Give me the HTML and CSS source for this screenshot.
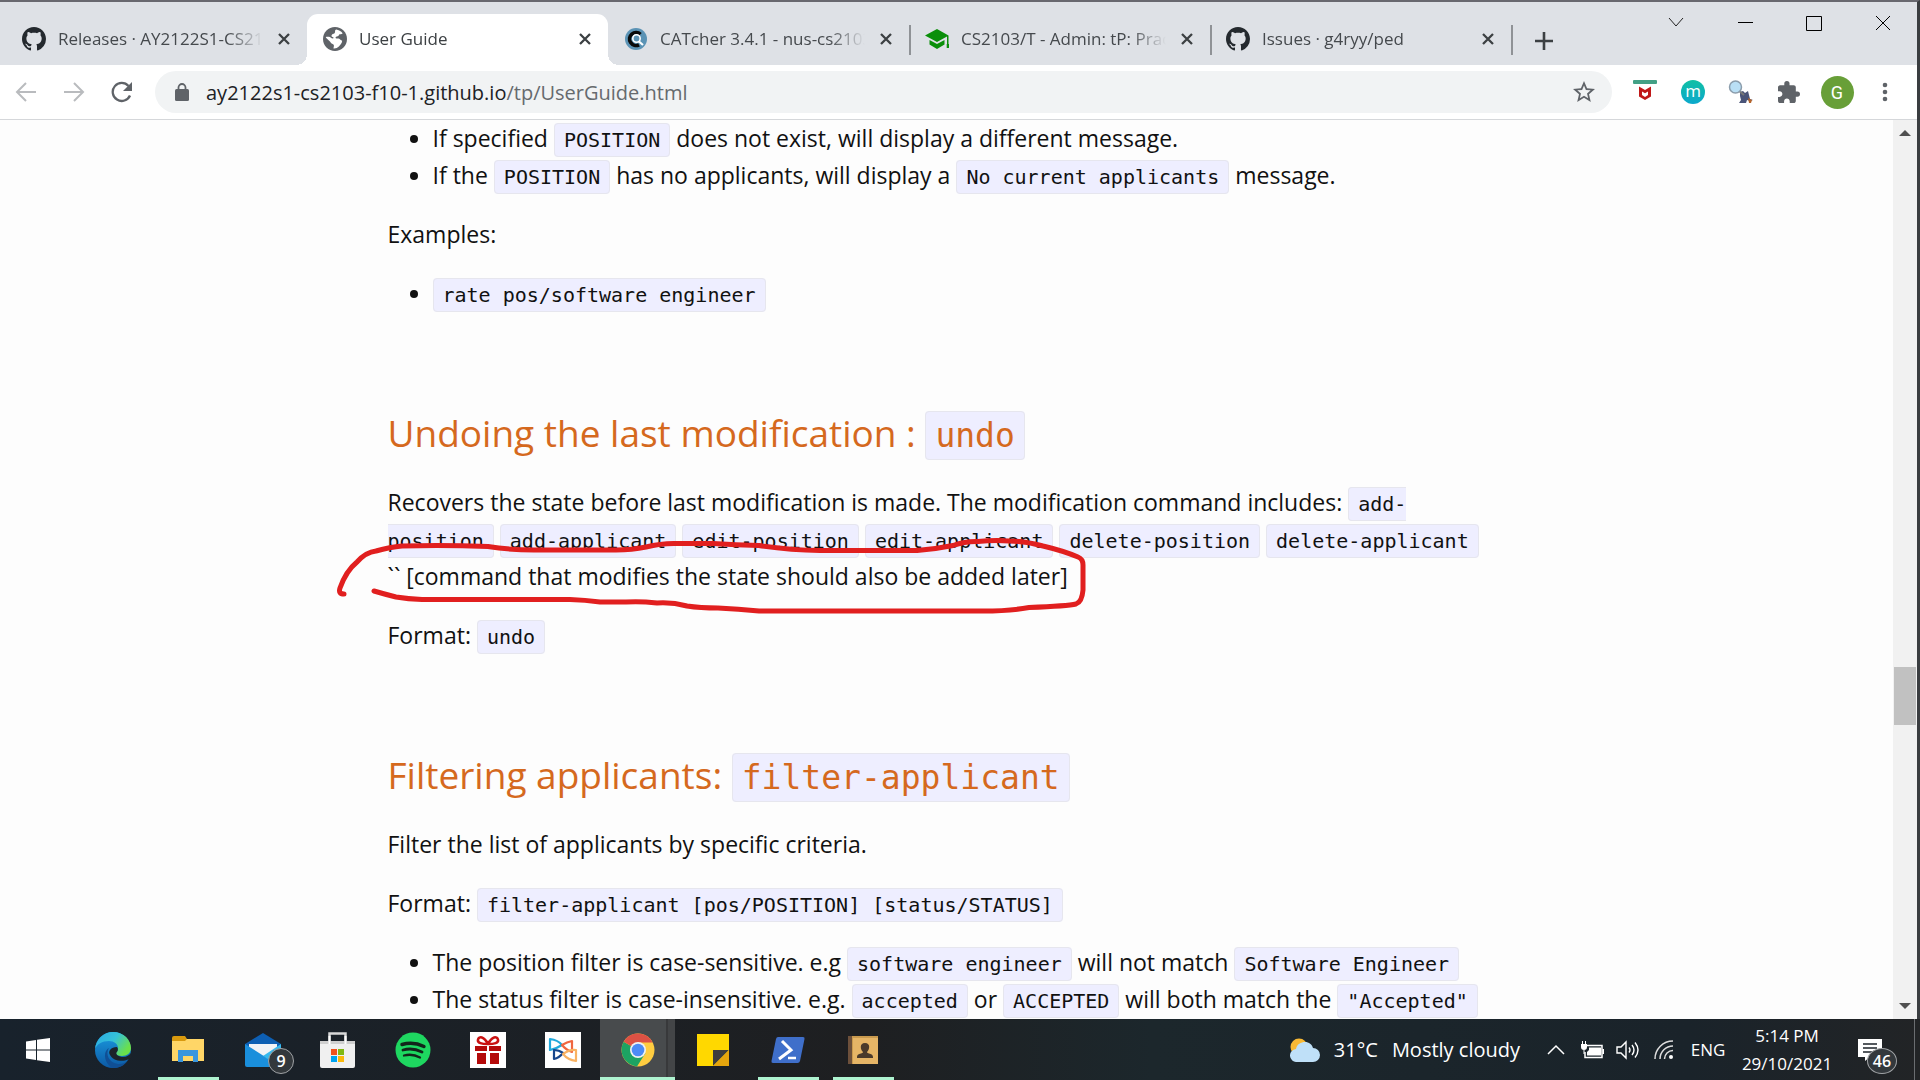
FILE: index.html
```html
<!DOCTYPE html>
<html lang="en">
<head>
<meta charset="utf-8">
<title>User Guide</title>
<link rel="stylesheet" href="styles.css">
</head>
<body>
<svg width="0" height="0" class="defs" aria-hidden="true">
  <defs>
    <symbol id="github" viewBox="0 0 16 16"><path fill="#24292e" d="M8 0C3.58 0 0 3.58 0 8c0 3.54 2.29 6.53 5.47 7.59.4.07.55-.17.55-.38 0-.19-.01-.82-.01-1.49-2.01.37-2.53-.49-2.69-.94-.09-.23-.48-.94-.82-1.13-.28-.15-.68-.52-.01-.53.63-.01 1.08.58 1.23.82.72 1.21 1.87.87 2.33.66.07-.52.28-.87.51-1.07-1.78-.2-3.64-.89-3.64-3.95 0-.87.31-1.59.82-2.15-.08-.2-.36-1.02.08-2.12 0 0 .67-.21 2.2.82.64-.18 1.32-.27 2-.27s1.36.09 2 .27c1.53-1.04 2.2-.82 2.2-.82.44 1.1.16 1.92.08 2.12.51.56.82 1.27.82 2.15 0 3.07-1.87 3.75-3.65 3.95.29.25.54.73.54 1.48 0 1.07-.01 1.93-.01 2.2 0 .21.15.46.55.38A8.01 8.01 0 0 0 16 8c0-4.42-3.58-8-8-8z"/></symbol>
    <symbol id="close" viewBox="0 0 14 14"><path d="M2 2l10 10M12 2L2 12" stroke="#3c4043" stroke-width="2.3" fill="none"/></symbol>
  </defs>
</svg>

<div class="window">
  <header class="tabstrip">
    <div class="tabs">
      <div class="tab">
        <svg class="favicon"><use href="#github"/></svg>
        <span class="tab-title">Releases · AY2122S1-CS2103</span>
        <button class="tab-close" aria-label="Close tab"><svg width="14" height="14"><use href="#close"/></svg></button>
      </div>
      <div class="tab active">
        <svg class="favicon" viewBox="2 2 20 20"><path fill="#5f6368" d="M12 2C6.48 2 2 6.48 2 12s4.480 10 10 10 10-4.480 10-10S17.520 2 12 2z"/><path fill="#fff" d="M13 4c2 .2 4 1.400 5.400 3.200-.7.9-1.400 1-2.400.8-.8.100-.8 1.500-1.800 1.700-1 .3-1.700.2-1.700 1.200 0 .8 1.200.5 2.500.7 1.400.2 1.700 1.700 3 1.900-.1 2-2 4.500-4.500 6.100-.8.300-2 .4-2.800.3.200-1.500.8-2.300 0-3.300-.8-.8-2.200-.9-2.500-2.200l-3.900-3.600c.2-1 .9-.6 2.500-.6 1.700.1 2 1.400 3.400 1.400.9 0 .7-1.200-.2-1.300-1-.2-1.200-1.200-.6-1.900.8-.8 2.400-.7 2.600-2 .2-1-.3-1.800 1-2.400z"/></svg>
        <span class="tab-title">User Guide</span>
        <button class="tab-close" aria-label="Close tab"><svg width="14" height="14"><use href="#close"/></svg></button>
      </div>
      <div class="tab">
        <svg class="favicon" viewBox="0 0 24 24"><circle cx="12" cy="12" r="11" fill="#5b93b5"/><path d="M16.500 7.300A6.500 6.500 0 1 0 15 17.800" stroke="#0a0a0a" stroke-width="3.600" fill="none"/><circle cx="12.500" cy="11.500" r="3.700" fill="#5b93b5" stroke="#fff" stroke-width="1.600"/><path d="M15 14.500l4 3.500" stroke="#fff" stroke-width="2.200"/></svg>
        <span class="tab-title">CATcher 3.4.1 - nus-cs2103</span>
        <button class="tab-close" aria-label="Close tab"><svg width="14" height="14"><use href="#close"/></svg></button>
      </div>
      <div class="tab divided">
        <svg class="favicon" viewBox="0 0 24 24"><path fill="#0a8f0a" d="M12 2L0 8.500 12 15l10-5.400V18h1.500V8.500z"/><path fill="#0a8f0a" d="M4.500 13v4.500L12 22l7.500-4.500V13L12 17zM21.700 17h2.300v4h-2.300z"/></svg>
        <span class="tab-title">CS2103/T - Admin: tP: Practical</span>
        <button class="tab-close" aria-label="Close tab"><svg width="14" height="14"><use href="#close"/></svg></button>
      </div>
      <div class="tab divided last">
        <svg class="favicon"><use href="#github"/></svg>
        <span class="tab-title">Issues · g4ryy/ped</span>
        <button class="tab-close" aria-label="Close tab"><svg width="14" height="14"><use href="#close"/></svg></button>
      </div>
      <button class="new-tab" aria-label="New tab"><svg width="18" height="18" viewBox="0 0 18 18"><path d="M9 0v18M0 9h18" stroke="#3c4043" stroke-width="2.600"/></svg></button>
    </div>
    <div class="controls">
      <button aria-label="Search tabs"><svg width="16" height="16" viewBox="0 0 16 16"><path d="M1 3l7 8 7-8" stroke="#222" fill="none"/></svg></button>
      <button aria-label="Minimize"><svg width="16" height="16" viewBox="0 0 16 16"><path d="M1 7.500h15" stroke="#000"/></svg></button>
      <button aria-label="Maximize"><svg width="16" height="16" viewBox="0 0 16 16"><path d="M.5 1.500h15v14H.5z" stroke="#000" fill="none"/></svg></button>
      <button aria-label="Close window"><svg width="16" height="16" viewBox="0 0 16 16"><path d="M1 1l14 14M15 1L1 15" stroke="#000"/></svg></button>
    </div>
  </header>

  <nav class="toolbar">
    <button class="tool" aria-label="Back"><svg width="22" height="22" viewBox="0 0 22 22"><path d="M21 11H2M11 2l-9 9 9 9" stroke="#b9bbbe" stroke-width="2" fill="none"/></svg></button>
    <button class="tool" aria-label="Forward"><svg width="22" height="22" viewBox="0 0 22 22"><path d="M1 11h19M11 2l9 9-9 9" stroke="#b9bbbe" stroke-width="2" fill="none"/></svg></button>
    <button class="tool" aria-label="Reload"><svg width="22" height="22" viewBox="0 0 22 22"><path d="M19 14.500A9 9 0 1 1 17.500 5" stroke="#5f6368" stroke-width="2.300" fill="none"/><path d="M21 1v9h-9z" fill="#5f6368"/></svg></button>
    <div class="omnibox">
      <svg width="14" height="18" viewBox="0 0 14 18"><rect y="6" width="14" height="12" rx="1.500" fill="#5f6368"/><path d="M3.500 7V4.500a3.500 3.500 0 0 1 7 0V7" stroke="#5f6368" stroke-width="1.800" fill="none"/></svg>
      <a class="url" href="#undo">ay2122s1-cs2103-f10-1.github.io<span>/tp/UserGuide.html</span></a>
      <button class="star" aria-label="Bookmark this page"><svg width="22" height="22" viewBox="2 2 20 20"><path fill="#5f6368" d="M22 9.240l-7.190-.62L12 2 9.190 8.630 2 9.240l5.460 4.730L5.820 21 12 17.270 18.180 21l-1.630-7.030L22 9.240zM12 15.400l-3.760 2.270 1-4.280-3.320-2.880 4.380-.38L12 6.100l1.710 4.040 4.380.38-3.320 2.880 1 4.280L12 15.400z"/></svg></button>
    </div>
    <div class="extensions">
      <button class="tool" aria-label="Web advisor"><svg width="24" height="24" viewBox="0 0 24 24"><rect width="24" height="4" rx="1" fill="#43a085"/><path d="M6 6.500l6 3.500 6-3.500v10L12 20l-6-3.500z" fill="#c01818"/><path d="M9 11.500l3 1.700 3-1.700v3.500L12 17l-3-2z" fill="#fff"/></svg></button>
      <button class="tool" aria-label="Mail extension"><span class="m-badge">m</span></button>
      <button class="tool" aria-label="Search inspector"><svg width="26" height="24" viewBox="0 0 26 24"><path d="M12 12l3-1 2 2 3-2 1 4 1 4 3 1-3 1-3-1-1 3h-7l2-3-1-4z" fill="#4a5478"/><path d="M20 18l4 2-1 3h-2z" fill="#b5652c"/><path d="M10 10l6 5" stroke="#777" stroke-width="2"/><circle cx="7.500" cy="7" r="6" fill="#b9dff5" stroke="#8b9dac" stroke-width="1.500"/></svg></button>
      <button class="tool" aria-label="Extensions"><svg width="22" height="22" viewBox="2 1 21 21"><path fill="#5f6368" d="M20.500 11H19V7c0-1.100-.9-2-2-2h-4V3.500a2.500 2.500 0 0 0-5 0V5H4c-1.100 0-1.990.9-1.990 2v3.800H3.500c1.490 0 2.700 1.210 2.700 2.700s-1.210 2.700-2.700 2.700H2V20c0 1.100.9 2 2 2h3.800v-1.500c0-1.490 1.210-2.700 2.700-2.700s2.700 1.210 2.700 2.700V22H17c1.100 0 2-.9 2-2v-4h1.500a2.500 2.500 0 0 0 0-5z"/></svg></button>
      <button class="tool" aria-label="Profile"><span class="avatar">G</span></button>
      <button class="tool" aria-label="Menu"><svg width="6" height="20" viewBox="0 0 6 20"><g fill="#5f6368"><circle cx="3" cy="3" r="2.300"/><circle cx="3" cy="10" r="2.300"/><circle cx="3" cy="17" r="2.300"/></g></svg></button>
    </div>
  </nav>

  <div class="viewport">
    <main class="page">
      <ul>
        <li>If specified <code>POSITION</code> does not exist, will display a different message.</li>
        <li>If the <code>POSITION</code> has no applicants, will display a <code>No current applicants</code> message.</li>
      </ul>
      <p>Examples:</p>
      <ul>
        <li><code>rate pos/software engineer</code></li>
      </ul>

      <h3 id="undo">Undoing the last modification : <code>undo</code></h3>
      <div class="marked">
        <p>Recovers the state before last modification is made. The modification command includes: <code>add-<br>position</code> <code>add-applicant</code> <code>edit-position</code> <code>edit-applicant</code> <code>delete-position</code> <code>delete-applicant</code><br>`` [command that modifies the state should also be added later]</p>
        <svg class="scribble" width="770" height="95" viewBox="330 530 770 95" aria-hidden="true"><path d="M344 594q-6 0-4-6Q346 571 357 562 366 552 376 551 390 547 402 546 445 545 488 546.500 510 550 534 550H616Q632 550 646 547 662 543 677 543.500H713Q736 545 759 545.500 790 550 820 550.500H917Q936 549 953 545.500 966 541 978 541.500 994 540 1009 541 1025 541 1043 546 1064 551 1078 557 1083 559 1083 565V590Q1082 602 1076 604 1068 606 1029 607.500 1010 611 983 611H759Q738 609 718 608 700 608 687 606 672 602 657 603 640 601 626 602H600Q585 600 570 599.500H422Q408 599 396 597 384 594 374 591"/></svg>
      </div>
      <p>Format: <code>undo</code></p>

      <h3>Filtering applicants: <code>filter-applicant</code></h3>
      <p>Filter the list of applicants by specific criteria.</p>
      <p>Format: <code>filter-applicant [pos/POSITION] [status/STATUS]</code></p>
      <ul>
        <li>The position filter is case-sensitive. e.g <code>software engineer</code> will not match <code>Software Engineer</code></li>
        <li>The status filter is case-insensitive. e.g. <code>accepted</code> or <code>ACCEPTED</code> will both match the <code>"Accepted"</code></li>
      </ul>
    </main>
    <div class="scrollbar" aria-hidden="true">
      <svg width="12" height="6" viewBox="0 0 12 6"><path d="M0 6l6-6 6 6z" fill="#505050"/></svg>
      <div class="track"><div class="thumb"></div></div>
      <svg width="12" height="6" viewBox="0 0 12 6"><path d="M0 0l6 6 6-6z" fill="#505050"/></svg>
    </div>
  </div>
</div>

<footer class="taskbar">
  <div class="apps">
    <button class="app" aria-label="Start"><svg width="24" height="24" viewBox="0 0 24 24"><path fill="#fff" d="M0 3.500L10 2v9.500H0zM11 1.800L24 0v11.500H11zM0 12.500h10V22L0 20.500zM11 12.500h13V24l-13-1.800z"/></svg></button>
    <button class="app" aria-label="Edge"><svg width="36" height="36" viewBox="0 0 36 36"><defs><linearGradient id="ea" x1="0" y1="0" x2="1" y2=".5"><stop offset="0" stop-color="#2aa8e4"/><stop offset=".55" stop-color="#35c1d8"/><stop offset="1" stop-color="#6be04a"/></linearGradient><linearGradient id="eb" x1="0" y1="0" x2="0" y2="1"><stop offset="0" stop-color="#1b9de2"/><stop offset="1" stop-color="#0c59a4"/></linearGradient></defs><circle cx="18" cy="18" r="18" fill="url(#eb)"/><path d="M0 17C1 7 9 0 18 0c11 0 18 8 18 16 0 5-4 8-9 8-4 0-6-1-6-3 0-1 2-2 2-5 0-4-4-7-9-7C7 9 2 12 0 17z" fill="url(#ea)"/><path d="M14 16c-4 6 0 15 9 16 4 .4 8-1 10-4-3 5-8 8-15 8C12 34 8 25 11 19c1-1.600 2-2.500 3-3z" fill="#104f95"/><path d="M22 15c1.500 2 1 4-.5 5.500-1 2 2 4.500 7 4.500 3 0 6-2 7.500-4v5l-3 1.500c-6 3-16 1-18.500-5.500-1-3 1-7 7.500-7z" fill="#1c232a"/></svg></button>
    <button class="app running" aria-label="File Explorer"><svg width="32" height="28" viewBox="0 0 32 28"><path d="M0 2q0-2 2-2h11l2 3h15q2 0 2 2v20H0z" fill="#d99a0e"/><path d="M0 5h13l2-2h17v22H0z" fill="#ffd667"/><path d="M6 14h20v12h-5v-6H11v6H6z" fill="#3a96dd"/></svg></button>
    <button class="app" aria-label="Mail, 9 unread"><svg width="36" height="34" viewBox="0 0 36 34"><path d="M0 11L18 0l18 11v10H0z" fill="#0d5fb3"/><path d="M4 11h28v12H4z" fill="#f1f3f6"/><path d="M0 11l36 23H2q-2 0-2-2z" fill="#1a8fdc"/><path d="M36 11L18 23l17 11q1 0 1-2z" fill="#36b9ee"/></svg><span class="count">9</span></button>
    <button class="app" aria-label="Store"><svg width="36" height="36" viewBox="0 0 36 36"><path d="M9.500 12V1.500h16V12" fill="none" stroke="#d8d8d8" stroke-width="2.500"/><path d="M0 9h35v25q0 2-2 2H2q-2 0-2-2z" fill="#f0f0f0"/><path d="M0 9h35v3H0z" fill="#cfcfcf"/><path d="M9.500 12V4M25.500 12V4" stroke="#fff" stroke-width="2"/><path d="M11 17h6v6h-6z" fill="#f1511b"/><path d="M18 17h6v6h-6z" fill="#80b912"/><path d="M11 24h6v6h-6z" fill="#00a3ee"/><path d="M18 24h6v6h-6z" fill="#fbb90b"/></svg></button>
    <button class="app" aria-label="Spotify"><svg width="36" height="36" viewBox="0 0 36 36"><circle cx="18" cy="18" r="17.500" fill="#1ed760"/><g fill="none" stroke="#12251a" stroke-linecap="round"><path d="M7 12.500c7-2 15-1.500 22 2" stroke-width="3.400"/><path d="M8 18c6-1.700 13-1 19 2" stroke-width="2.800"/><path d="M9 23.500c5-1.300 11-.8 16 2" stroke-width="2.300"/></g></svg></button>
    <button class="app" aria-label="Gift"><svg width="36" height="36" viewBox="0 0 36 36"><path d="M0 0h36v36H0z" fill="#fff"/><path d="M5 14h12v5H5zM19 14h12v5H19zM7 21h9v11H7zM20 21h9v11h-9z" fill="#b40a0a"/><path d="M18 12C12 12 7 11 8 7.500 9 4 14 4 18 12zM18 12c6 0 11-1 10-4.500C27 4 22 4 18 12z" fill="none" stroke="#c91212" stroke-width="2.500"/></svg></button>
    <button class="app" aria-label="Ribbon"><svg width="36" height="36" viewBox="0 0 36 36"><path d="M0 0h36v36H0z" fill="#fff"/><g fill="none" stroke-width="2.200" stroke-linejoin="round"><path d="M5 18V7q8 1 12 6-6 4-12 5z" stroke="#21a9dc"/><path d="M9 18v9q5-1 9-6-4-3-9-3z" stroke="#17468c"/><path d="M17 13q5-3 10-4v11q-6-2-10-7z" stroke="#f0663f"/><path d="M18 22q7-5 13-4v11q-8-1-13-7z" stroke="#f9b262"/></g></svg></button>
    <button class="app running current" aria-label="Chrome"><svg width="34" height="34" viewBox="0 0 34 34"><circle cx="17" cy="17" r="16.500" fill="#ffcd40"/><path d="M17 17L2.700 8.800A16.500 16.500 0 0 0 16 33.400L24.500 20z" fill="#1da362"/><path d="M17 17L2.700 8.700A16.500 16.500 0 0 1 31.600 9.500H17z" fill="#dd5144"/><circle cx="17" cy="17" r="8" fill="#f1f1f1"/><circle cx="17" cy="17" r="6.300" fill="#4c8bf5"/></svg></button>
    <button class="app" aria-label="Sticky Notes"><svg width="32" height="32" viewBox="0 0 32 32"><path d="M0 0h32v32H0z" fill="#ffd800"/><path d="M16 16h16L16 32z" fill="#3d3d3d"/><path d="M32 16v16H16z" fill="#e5a50d"/></svg></button>
    <button class="app running" aria-label="PowerShell"><svg width="34" height="26" viewBox="0 0 34 26"><path d="M7 0h25q2 0 1.500 2L29 24q-.5 2-2.500 2H2q-2 0-1.500-2L5 2q.5-2 2-2z" fill="#3f6fca"/><path d="M11 4l9 9L8 22" fill="none" stroke="#fff" stroke-width="3"/><path d="M17 21h8" stroke="#fff" stroke-width="2.500"/></svg></button>
    <button class="app running" aria-label="Contacts"><svg width="30" height="28" viewBox="0 0 30 28"><path d="M0 0h30v28H0z" fill="#c99a4e"/><path d="M5 2h25v26H5z" fill="#e6b566"/><path d="M0 0h4v28H0z" fill="#6d503b"/><path d="M17 7c6 0 4.500 7 2 9 0 2 6 1 6 5v1H9v-1c0-4 6-3 6-5-2.500-2-4-9 2-9z" fill="#4a3a2b"/></svg></button>
  </div>
  <div class="tray">
    <button class="weather"><svg width="30" height="24" viewBox="0 0 30 24"><circle cx="9" cy="9" r="8.500" fill="#f9b934"/><path d="M7 24a6.500 6.500 0 0 1-1-13C7 6 11 4 15 4c4 0 7 2.500 8 6a7 7 0 0 1 0 14z" fill="#bfe0f8"/></svg><span>31°C</span><span>Mostly cloudy</span></button>
    <button class="icon" aria-label="Show hidden icons"><svg width="18" height="12" viewBox="0 0 18 12"><path d="M1 10l8-8 8 8" stroke="#fff" stroke-width="1.500" fill="none"/></svg></button>
    <button class="icon" aria-label="Battery"><svg width="24" height="18" viewBox="0 0 24 18"><path d="M6 4.500h16v12H5V11" fill="none" stroke="#fff" stroke-width="1.500"/><path d="M9 6.500h12v8H7V11l2-2zM22.500 8H24v5h-1.500zM1 3h6v3q0 3-3 3T1 6zM2 0h1v3H2zM5 0h1v3H5zM3.500 9h1v4h-1z" fill="#fff"/></svg></button>
    <button class="icon" aria-label="Volume"><svg width="24" height="20" viewBox="0 0 24 20"><path d="M1 7h4l5-5v16l-5-5H1z" stroke="#fff" stroke-width="1.400" fill="none"/><path d="M13 7.500q2 2.500 0 5M16 5q4 5 0 10M19 2.500q6 7.500 0 15" stroke="#fff" stroke-width="1.400" fill="none"/></svg></button>
    <button class="icon" aria-label="Network"><svg width="20" height="20" viewBox="0 0 20 20"><path d="M1 19A18 18 0 0 1 19 1M6 19A13 13 0 0 1 19 6M10.500 19A8.500 8.500 0 0 1 19 10.500" stroke="#ddd" stroke-width="1.500" fill="none"/><circle cx="17" cy="17" r="2" fill="#fff"/></svg></button>
    <button class="lang">ENG</button>
    <button class="clock"><span>5:14 PM</span><span>29/10/2021</span></button>
    <button class="notify" aria-label="Notifications"><svg width="24" height="22" viewBox="0 0 24 22"><path d="M0 0h24v18H12l-5 4v-4H0z" fill="#fff"/><path d="M5 5h14M5 9h14M5 13h10" stroke="#1c232a" stroke-width="1.500"/></svg><span class="count">46</span></button>
    <span class="peek"></span>
  </div>
</footer>
</body>
</html>
```
FILE: styles.css
```css
* { box-sizing: border-box; }

body {
  margin: 0;
  height: 100vh;
  display: flex;
  flex-direction: column;
  overflow: hidden;
  background: #1c2227;
  font-family: "Open Sans", "Noto Sans", sans-serif;
  color: #111;
}

button {
  border: 0;
  padding: 0;
  background: none;
  font: inherit;
  color: inherit;
  display: flex;
  align-items: center;
  justify-content: center;
}

.defs { position: absolute; }

.window {
  flex: 1;
  min-height: 0;
  display: flex;
  flex-direction: column;
  border-top: 2px solid #68686f;
  border-right: 3px solid #3a3d40;
  background: #fdfdfd;
}

/* Tab strip */
.tabstrip {
  flex: none;
  display: flex;
  justify-content: space-between;
  height: 63px;
  background: #dee1e6;
}

.tabs { display: flex; align-items: flex-end; padding-left: 6px; }

.tab {
  position: relative;
  display: flex;
  align-items: center;
  width: 301px;
  height: 51px;
  padding: 0 16px 2px;
  color: #45494d;
  font-size: 17px;
}

.tab.active { background: #fff; border-radius: 11px 11px 0 0; color: #3c4043; }

.tab.active::before,
.tab.active::after {
  content: "";
  position: absolute;
  bottom: 0;
  width: 11px;
  height: 11px;
}

.tab.active::before { right: 100%; background: radial-gradient(circle at 0 0, #dee1e6 11px, #fff 11px); }
.tab.active::after { left: 100%; background: radial-gradient(circle at 100% 0, #dee1e6 11px, #fff 11px); }

.tab.divided::before,
.tab.last::after {
  content: "";
  position: absolute;
  left: 0;
  top: 11px;
  width: 2px;
  height: 30px;
  background: #8f9296;
}

.tab.last::after { left: 100%; }

.favicon { flex: none; width: 24px; height: 24px; margin-right: 12px; }

.tab-title {
  flex: 1;
  overflow: hidden;
  white-space: nowrap;
  margin-right: 14px;
  mask-image: linear-gradient(to right, #000 calc(100% - 36px), transparent);
}

.new-tab { width: 66px; height: 49px; }

.controls { display: flex; }
.controls button { width: 69px; height: 42px; }

/* Toolbar */
.toolbar {
  flex: none;
  display: flex;
  align-items: center;
  height: 55px;
  padding: 0 8px 0 2px;
  background: #fff;
  border-bottom: 1px solid #d5d7da;
}

.tool { width: 48px; height: 42px; }

.omnibox {
  flex: 1;
  display: flex;
  align-items: center;
  height: 42px;
  margin: 0 9px;
  padding: 0 17px 0 20px;
  border-radius: 21px;
  background: #f1f3f4;
  font-size: 20px;
}

.url { flex: 1; margin-left: 17px; color: #202124; text-decoration: none; }
.url span { color: #666a6e; }

.extensions { display: flex; }

.m-badge,
.avatar {
  display: flex;
  align-items: center;
  justify-content: center;
  border-radius: 50%;
  color: #fff;
}

.m-badge { width: 24px; height: 24px; padding-bottom: 3px; background: linear-gradient(#10c0a4, #0ca8cc); font-size: 17px; }
.avatar { width: 33px; height: 33px; background: #689f38; font-family: Roboto, sans-serif; font-size: 18px; }

/* Document */
.viewport { flex: 1; min-height: 0; display: flex; overflow: hidden; }

.page {
  flex: 1;
  min-width: 0;
  padding: 0 calc((100% - 1142px) / 2);
  font-size: 23px;
  line-height: 37px;
}

.page > *,
.marked p { margin: 0 0 22px; }

.page ul { padding-left: 45px; }

.page h3 {
  margin-top: 92px;
  color: #d5691e;
  font-size: 37px;
  font-weight: 400;
  line-height: 58px;
}

code {
  padding: 4px 9px;
  border: 1px solid #e6e6ee;
  border-radius: 4px;
  background: #eef;
  font-family: "DejaVu Sans Mono", monospace;
  font-size: 20px;
  line-height: 1;
}

h3 code { font-size: 33px; }

.marked { position: relative; white-space: nowrap; }

.scribble {
  position: absolute;
  left: -58px;
  top: 46px;
  fill: none;
  stroke: #e11f1f;
  stroke-width: 5;
  stroke-linecap: round;
  stroke-linejoin: round;
}

.scrollbar {
  flex: none;
  display: flex;
  flex-direction: column;
  align-items: center;
  width: 24px;
  padding: 10px 0;
  background: #f1f1f1;
}

.track { flex: 1; align-self: stretch; display: grid; grid-template-rows: 65fr 58px 34fr; padding: 0 1px; }
.thumb { grid-row: 2; background: #c1c1c1; }

/* Taskbar */
.taskbar {
  flex: none;
  display: flex;
  justify-content: space-between;
  height: 61px;
  background: linear-gradient(90deg, #18222c, #1e1f21 45%, #1c272c 60%, #1a232a 88%, #222426);
  color: #fff;
}

.apps, .tray { display: flex; align-items: stretch; }

.app { position: relative; width: 75px; }

.running::after {
  content: "";
  position: absolute;
  left: 8px;
  right: 6px;
  bottom: 0;
  height: 3px;
  background: #aef3d0;
}

.current { background: linear-gradient(90deg, #484b4d 66px, #38393b 66px, #38393b 68px, #434547 68px); }
.current::after { left: 0; right: 0; }

.count {
  position: absolute;
  left: 43px;
  top: 29px;
  display: flex;
  align-items: center;
  justify-content: center;
  width: 26px;
  height: 26px;
  border: 1px solid #a0a3a6;
  border-radius: 50%;
  background: #33383c;
  font-size: 16px;
  font-weight: 600;
}

.weather { gap: 14px; margin-right: 18px; font-size: 20px; }
.icon { width: 36px; }
.lang { width: 52px; font-size: 17px; }

.clock {
  flex-direction: column;
  width: 106px;
  font-size: 17px;
  line-height: 28px;
}

.notify { position: relative; width: 60px; margin-right: 14px; }
.notify .count { left: 27px; width: 30px; height: 26px; }
.peek { width: 6px; border-left: 1px solid #6a6d70; }
```
